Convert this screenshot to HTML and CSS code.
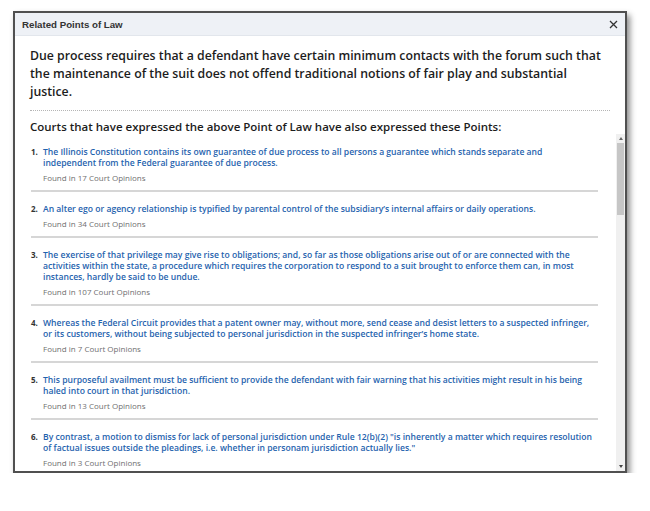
FILE: index.html
```html
<!DOCTYPE html>
<html lang="en">
<head>
<meta charset="utf-8">
<title>Related Points of Law</title>
<link rel="stylesheet" href="styles.css">
</head>
<body>
<div class="modal">
  <div class="modal-header">
    <span class="title">Related Points of Law</span>
    <span class="close" aria-label="Close">
      <svg width="9" height="9" viewBox="0 0 9 9"><path d="M1 1L8 8M8 1L1 8" stroke="#333" stroke-width="1.3" fill="none"/></svg>
    </span>
  </div>
  <div class="intro">
    <h1 class="point">Due process requires that a defendant have certain minimum contacts with the forum such that the maintenance of the suit does not offend traditional notions of fair play and substantial justice.</h1>
    <div class="dotted"></div>
    <h2 class="sub">Courts that have expressed the above Point of Law have also expressed these Points:</h2>
  </div>
  <div class="scroll">
    <ol class="list">
      <li class="item"><span class="num">1.</span><div class="body"><a class="text">The Illinois Constitution contains its own guarantee of due process to all persons a guarantee which stands separate and independent from the Federal guarantee of due process.</a><div class="found">Found in 17 Court Opinions</div></div></li>
      <li class="item"><span class="num">2.</span><div class="body"><a class="text">An alter ego or agency relationship is typified by parental control of the subsidiary’s internal affairs or daily operations.</a><div class="found">Found in 34 Court Opinions</div></div></li>
      <li class="item"><span class="num">3.</span><div class="body"><a class="text">The exercise of that privilege may give rise to obligations; and, so far as those obligations arise out of or are connected with the activities within the state, a procedure which requires the corporation to respond to a suit brought to enforce them can, in most instances, hardly be said to be undue.</a><div class="found">Found in 107 Court Opinions</div></div></li>
      <li class="item"><span class="num">4.</span><div class="body"><a class="text">Whereas the Federal Circuit provides that a patent owner may, without more, send cease and desist letters to a suspected infringer, or its customers, without being subjected to personal jurisdiction in the suspected infringer’s home state.</a><div class="found">Found in 7 Court Opinions</div></div></li>
      <li class="item"><span class="num">5.</span><div class="body"><a class="text">This purposeful availment must be sufficient to provide the defendant with fair warning that his activities might result in his being haled into court in that jurisdiction.</a><div class="found">Found in 13 Court Opinions</div></div></li>
      <li class="item"><span class="num">6.</span><div class="body"><a class="text">By contrast, a motion to dismiss for lack of personal jurisdiction under Rule 12(b)(2) "is inherently a matter which requires resolution of factual issues outside the pleadings, i.e. whether in personam jurisdiction actually lies."</a><div class="found">Found in 3 Court Opinions</div></div></li>
    </ol>
    <div class="scrollbar">
      <span class="arrow up"></span>
      <span class="track"><span class="thumb"></span></span>
      <span class="arrow down"></span>
    </div>
  </div>
</div>
</body>
</html>
```

FILE: styles.css
```css
* { box-sizing: border-box; }
html, body { margin: 0; padding: 0; background: #fff; }
body { font-family: "Open Sans", "Noto Sans", sans-serif; }

.modal {
  margin: 11px 0 0 13px;
  width: 614px;
  height: 462px;
  border: 2px solid #505050;
  background: #fff;
  box-shadow: 3px 4px 6px rgba(0,0,0,0.45);
  display: flex;
  flex-direction: column;
  overflow: hidden;
}

.modal-header {
  height: 23px;
  flex: none;
  background: #eef1f6;
  border-bottom: 1px solid #e2e6ec;
  display: flex;
  align-items: center;
  justify-content: space-between;
  padding: 0 7px;
}
.title {
  font-family: "Liberation Sans", Arial, sans-serif;
  font-weight: bold;
  font-size: 9.7px;
  color: #333;
}
.close { display: flex; }

.intro {
  flex: none;
  padding: 11px 15px 0 15px;
}
.point {
  margin: 0;
  font-size: 12.3px;
  line-height: 18px;
  font-weight: 600;
  color: #1c1c1c;
}
.dotted {
  margin-top: 9px;
  border-top: 1px dotted #b5b5b5;
}
.sub {
  margin: 9px 0 0;
  font-size: 11.5px;
  line-height: 14px;
  font-weight: 600;
  color: #1c1c1c;
}

.scroll {
  flex: 1;
  min-height: 0;
  display: flex;
  overflow: hidden;
}
.list {
  flex: 1;
  margin: 0;
  padding: 1px 18px 0 16px;
  list-style: none;
  overflow: hidden;
}
.item {
  display: grid;
  grid-template-columns: 12px 1fr;
  padding: 12px 0 7px;
  border-bottom: 2px solid #d6d6d6;
}
.body { padding-right: 5px; }
.num {
  font-size: 8px;
  line-height: 10.5px;
  font-weight: 700;
  color: #333;
}
.text {
  display: block;
  font-size: 8.6px;
  line-height: 11px;
  font-weight: 600;
  color: #1f63ae;
}
.found {
  margin-top: 3px;
  font-size: 8px;
  line-height: 11px;
  color: #6f6f6f;
}

.scrollbar {
  flex: none;
  width: 9px;
  background: #f0f0f0;
  display: flex;
  flex-direction: column;
  align-items: center;
  padding: 3px 0 3px;
}
.arrow {
  flex: none;
  width: 0;
  height: 0;
  border-left: 2.5px solid transparent;
  border-right: 2.5px solid transparent;
}
.arrow.up { border-bottom: 3px solid #666; }
.arrow.down { border-top: 3px solid #444; }
.track {
  flex: 1;
  width: 100%;
  padding: 3px 1px;
}
.thumb {
  display: block;
  height: 72px;
  background: #c6c6c6;
}
```
